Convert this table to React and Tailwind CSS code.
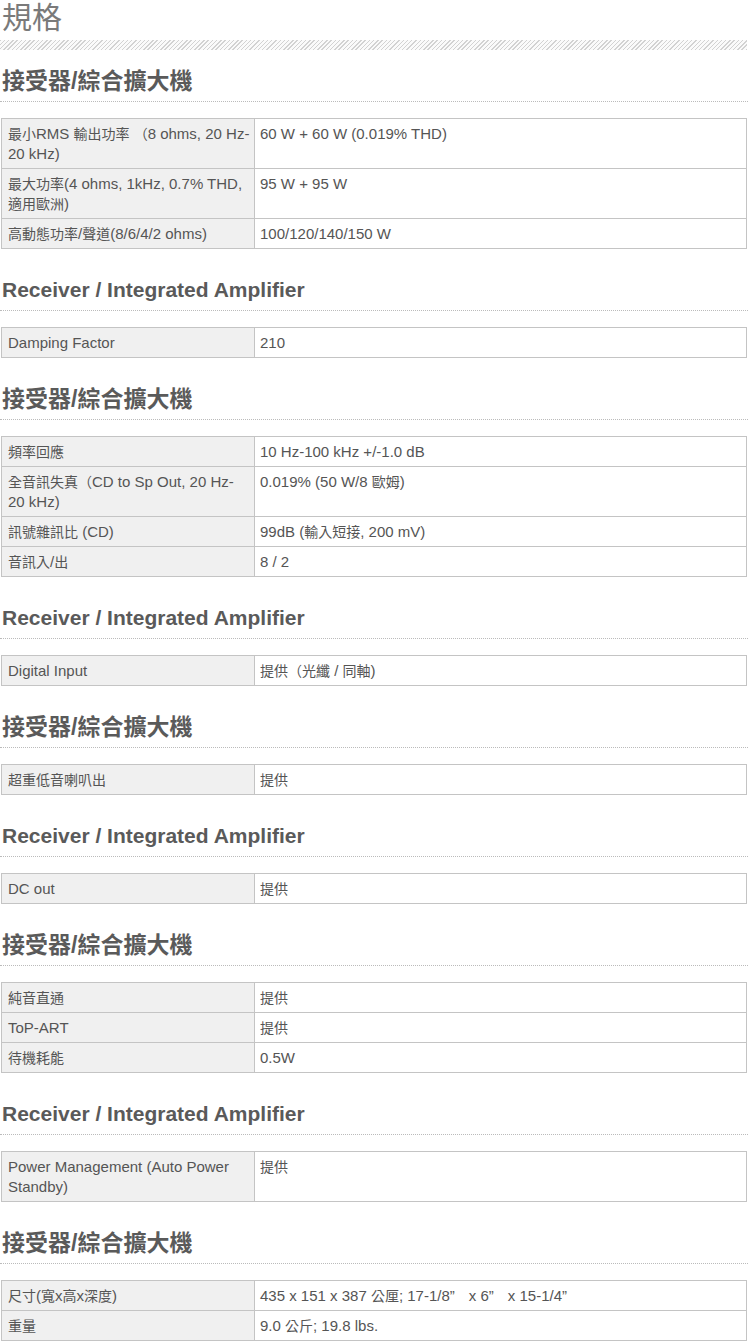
const F = { fontFamily: '"Liberation Sans", Arial, "Noto Sans CJK TC", sans-serif' };

const ZH = "接受器/綜合擴大機";
const EN = "Receiver / Integrated Amplifier";

const sections = [
  { t: ZH, rows: [
    ["最小RMS 輸出功率 （8 ohms, 20 Hz-20\u00a0kHz)", "60 W + 60 W (0.019% THD)"],
    ["最大功率(4 ohms, 1kHz, 0.7% THD, 適用歐洲)", "95 W + 95 W"],
    ["高動態功率/聲道(8/6/4/2 ohms)", "100/120/140/150 W"],
  ]},
  { t: EN, rows: [["Damping Factor", "210"]] },
  { t: ZH, rows: [
    ["頻率回應", "10 Hz-100 kHz +/-1.0 dB"],
    ["全音訊失真（CD to Sp Out, 20 Hz-20\u00a0kHz)", "0.019% (50 W/8 歐姆)"],
    ["訊號雜訊比 (CD)", "99dB (輸入短接, 200 mV)"],
    ["音訊入/出", "8 / 2"],
  ]},
  { t: EN, rows: [["Digital Input", "提供（光纖 / 同軸)"]] },
  { t: ZH, rows: [["超重低音喇叭出", "提供"]] },
  { t: EN, rows: [["DC out", "提供"]] },
  { t: ZH, rows: [["純音直通", "提供"], ["ToP-ART", "提供"], ["待機耗能", "0.5W"]] },
  { t: EN, rows: [["Power Management (Auto Power Standby)", "提供"]] },
  { t: ZH, rows: [
    ["尺寸(寬x高x深度)", "435 x 151 x 387 公厘; 17-1/8”　x 6”　x 15-1/4”"],
    ["重量", "9.0 公斤; 19.8 lbs."],
  ]},
];

function Mixed({ text }) {
  const parts = text.split(/([\u3000-\u9fff\uff00-\uffef]+)/);
  return (
    <>
      {parts.map((p, k) =>
        /[\u3000-\u9fff\uff00-\uffef]/.test(p) ? (
          <span key={k} className="text-[14px]">{p}</span>
        ) : (
          <span key={k}>{p}</span>
        )
      )}
    </>
  );
}

export default function App() {
  return (
    <div className="w-[750px] bg-white text-[#555]" style={F}>
      <h1 className="text-[30px] leading-[36px] text-[#7a7a7a] pl-[2px] font-normal">規格</h1>
      <div className="mt-[4px] h-[10px] w-[747px] bg-[repeating-linear-gradient(135deg,#d2d2d2_0,#d2d2d2_1px,#fafafa_1px,#fafafa_3px)]"></div>
      {sections.map((s, i) => (
        <div key={i} className={i === 0 ? "mt-[16px]" : "mt-[26px]"}>
          <h2
            className={
              "font-bold text-[#5a5a5a] leading-[30px] pl-[2px] pb-[5px] border-b border-dotted border-[#bbb] w-[748px] " +
              (s.t === EN ? "text-[21px]" : "text-[23px]")
            }
          >
            {s.t}
          </h2>
          <table className="mt-[16px] ml-[1px] w-[746px] border-collapse border border-[#b5b5b5] text-[15px] leading-[20px] text-[#555]">
            <tbody>
              {s.rows.map((r, j) => (
                <tr key={j}>
                  <td className="w-[253px] bg-[#f0f0f0] border border-[#c4c4c4] pl-[6px] pr-[2px] pt-[5px] pb-[4px] align-top">
                    <Mixed text={r[0]} />
                  </td>
                  <td className="border border-[#c4c4c4] pl-[5px] pr-[4px] pt-[5px] pb-[4px] align-top">
                    <Mixed text={r[1]} />
                  </td>
                </tr>
              ))}
            </tbody>
          </table>
        </div>
      ))}
    </div>
  );
}
